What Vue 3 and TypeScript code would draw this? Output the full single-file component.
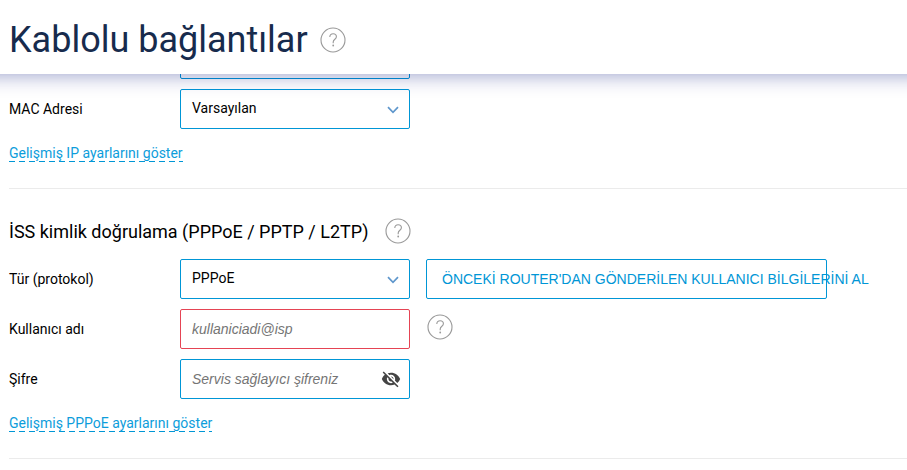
<script setup lang="ts">
import { defineComponent, h, ref } from 'vue'

const HelpIcon = defineComponent({
  setup() {
    return () =>
      h('svg', { width: 26, height: 26, viewBox: '0 0 26 26', fill: 'none', stroke: '#999' }, [
        h('circle', { cx: 13, cy: 13, r: 12, 'stroke-width': 1.1 }),
        h('path', { d: 'M9.8 9.9C9.8 7.9 11.1 6.7 13.1 6.7C15.1 6.7 16.4 7.9 16.4 9.7C16.4 12.3 13.2 12.2 13.2 15.1V16.2', 'stroke-width': 1.1 }),
        h('circle', { cx: 13.2, cy: 18.5, r: 0.9, fill: '#999', stroke: 'none' }),
      ])
  },
})

const Chevron = defineComponent({
  setup() {
    return () =>
      h('svg', { width: 12, height: 8, viewBox: '0 0 12 8', fill: 'none', stroke: '#5f97cc', 'stroke-width': 1.7 }, [
        h('path', { d: 'M1 1.2L6 6.3L11 1.2' }),
      ])
  },
})

const username = ref('')
const password = ref('')
const showPassword = ref(false)
</script>

<template>
  <div class="page">
    <header class="header">
      <h1>Kablolu bağlantılar</h1>
      <HelpIcon class="title-help" />
    </header>
    <main class="content">
      <section class="group first">
        <div class="row">
          <span class="label"></span>
          <div class="field"></div>
        </div>
        <div class="row">
          <span class="label">MAC Adresi</span>
          <div class="field select"><span>Varsayılan</span><Chevron /></div>
        </div>
        <a class="more">Gelişmiş IP ayarlarını göster</a>
      </section>
      <section class="group">
        <div class="heading">
          <h2>İSS kimlik doğrulama (PPPoE / PPTP / L2TP)</h2>
          <HelpIcon class="heading-help" />
        </div>
        <div class="row">
          <span class="label">Tür (protokol)</span>
          <div class="field select"><span>PPPoE</span><Chevron /></div>
          <button class="fetch">ÖNCEKİ ROUTER'DAN GÖNDERİLEN KULLANICI BİLGİLERİNİ AL</button>
        </div>
        <div class="row">
          <span class="label">Kullanıcı adı</span>
          <div class="field invalid"><input v-model="username" type="text" placeholder="kullaniciadi@isp" /></div>
          <HelpIcon class="row-help" />
        </div>
        <div class="row">
          <span class="label">Şifre</span>
          <div class="field">
            <input v-model="password" :type="showPassword ? 'text' : 'password'" placeholder="Servis sağlayıcı şifreniz" />
            <svg class="eye" width="20" height="20" viewBox="0 0 24 24" fill="#444" @click="showPassword = !showPassword">
              <path d="M12 7c2.76 0 5 2.24 5 5 0 .65-.13 1.26-.36 1.83l2.92 2.92c1.51-1.26 2.7-2.89 3.43-4.75-1.73-4.39-6-7.5-11-7.5-1.4 0-2.74.25-3.98.7l2.16 2.16C10.74 7.13 11.35 7 12 7zM2 4.27l2.28 2.28.46.46C3.08 8.3 1.78 10.02 1 12c1.73 4.39 6 7.5 11 7.5 1.55 0 3.03-.3 4.38-.84l.42.42L19.73 22 21 20.73 3.27 3 2 4.27zM7.53 9.8l1.55 1.55c-.05.21-.08.43-.08.65 0 1.66 1.34 3 3 3 .22 0 .44-.03.65-.08l1.55 1.55c-.67.33-1.41.53-2.2.53-2.76 0-5-2.24-5-5 0-.79.2-1.53.53-2.2zm4.31-.78l3.15 3.15.02-.16c0-1.66-1.34-3-3-3l-.17.01z" />
            </svg>
          </div>
        </div>
        <a class="more">Gelişmiş PPPoE ayarlarını göster</a>
      </section>
    </main>
  </div>
</template>

<style>
body {
  margin: 0;
  background: #fff;
}
</style>

<style scoped>
.page {
  height: 470px;
  overflow: hidden;
  background: #fff;
  color: #000;
  font: 14px/20px Roboto, sans-serif;
}
.page * {
  box-sizing: border-box;
}
.header {
  position: relative;
  z-index: 1;
  display: flex;
  align-items: center;
  height: 74px;
  margin: 0 -30px;
  padding: 5px 30px 0 39px;
  background: #fff;
  box-shadow: 0 0 20px rgba(0, 18, 124, 0.44);
}
h1 {
  margin: 0;
  color: #172b4d;
  font-size: 36px;
  font-weight: 400;
  line-height: 44px;
}
.title-help {
  margin: 0 0 0 12px;
}
.content {
  margin-top: -35px;
  padding-left: 9px;
}
.group {
  height: 270px;
  border-bottom: 1px solid #ebebeb;
}
.group.first {
  height: 150px;
}
.heading {
  display: flex;
  align-items: center;
  gap: 17px;
  height: 70px;
  padding-top: 15px;
}
.heading-help {
  margin-bottom: 2px;
}
h2 {
  margin: 0;
  font-size: 18px;
  font-weight: 400;
  line-height: 24px;
}
.row {
  display: flex;
  align-items: center;
  height: 40px;
  margin-bottom: 10px;
}
.label {
  width: 171px;
}
.field {
  display: flex;
  flex: none;
  align-items: center;
  width: 230px;
  height: 40px;
  padding: 0 8px 0 11px;
  border: 1px solid #0096d6;
  border-radius: 2px;
  background: #fff;
}
.select {
  justify-content: space-between;
  padding: 0 10px 2px 11px;
}
.select svg {
  margin-top: 4px;
}
.invalid {
  border-color: #e54454;
}
input {
  flex: 1;
  min-width: 0;
  padding: 0;
  border: 0;
  outline: 0;
  background: none;
  font: 14px/20px "Liberation Sans", sans-serif;
}
input::placeholder {
  color: #757575;
  font-style: italic;
}
.eye {
  flex: none;
  cursor: pointer;
}
.fetch {
  flex: none;
  width: 401px;
  height: 40px;
  margin-left: 16px;
  padding: 0 15px;
  border: 1px solid #0096d6;
  border-radius: 2px;
  background: #fff;
  color: #0096d6;
  font: 14px/20px "Liberation Sans", sans-serif;
  text-align: left;
  white-space: nowrap;
}
.row-help {
  margin: 0 0 4px 17px;
}
.more {
  display: inline-block;
  margin-top: 5px;
  background: repeating-linear-gradient(90deg, #0096d6 0 6px, transparent 6px 10px) 0 100% / 100% 1px no-repeat;
  color: #0d9ddb;
  line-height: 18px;
}
</style>
